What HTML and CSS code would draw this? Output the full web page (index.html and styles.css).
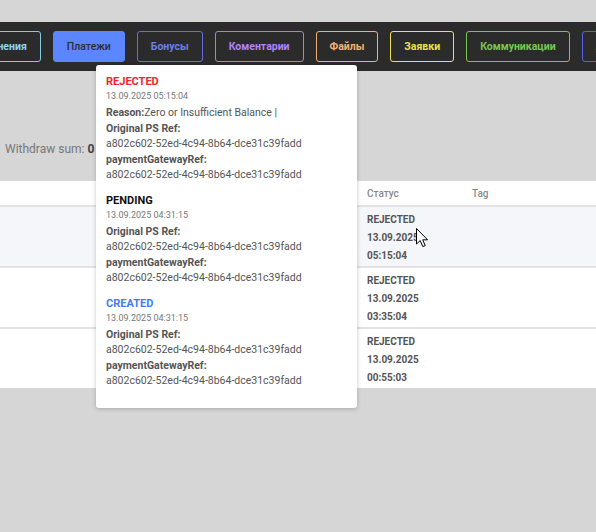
FILE: index.html
```html
<!DOCTYPE html>
<html lang="ru">
<head>
<meta charset="utf-8">
<link rel="stylesheet" href="styles.css">
</head>
<body>
<div class="page">
  <nav class="nav">
    <div class="nav-track">
      <button class="tab tab-cyan">Изменения</button>
      <button class="tab tab-active">Платежи</button>
      <button class="tab tab-indigo">Бонусы</button>
      <button class="tab tab-purple">Коментарии</button>
      <button class="tab tab-orange">Файлы</button>
      <button class="tab tab-yellow">Заявки</button>
      <button class="tab tab-green">Коммуникации</button>
      <button class="tab tab-blue">Аудит</button>
    </div>
  </nav>

  <div class="summary">Withdraw sum: <b>0</b></div>

  <div class="table">
    <div class="trow thead">
      <div class="cell"></div>
      <div class="cell">Статус</div>
      <div class="cell">Tag</div>
    </div>
    <div class="trow tbody hover">
      <div class="cell"></div>
      <div class="cell status">REJECTED<br>13.09.2025<br>05:15:04</div>
      <div class="cell"></div>
    </div>
    <div class="trow tbody">
      <div class="cell"></div>
      <div class="cell status">REJECTED<br>13.09.2025<br>03:35:04</div>
      <div class="cell"></div>
    </div>
    <div class="trow tbody last">
      <div class="cell"></div>
      <div class="cell status">REJECTED<br>13.09.2025<br>00:55:03</div>
      <div class="cell"></div>
    </div>
  </div>

  <div class="tooltip">
    <div class="tsec">
      <div class="thead-t red">REJECTED</div>
      <div class="tdate">13.09.2025 05:15:04</div>
      <div class="tlines">
        <div><b>Reason:</b>Zero or Insufficient Balance |</div>
        <div><b>Original PS Ref:</b></div>
        <div>a802c602-52ed-4c94-8b64-dce31c39fadd</div>
        <div><b>paymentGatewayRef:</b></div>
        <div>a802c602-52ed-4c94-8b64-dce31c39fadd</div>
      </div>
    </div>
    <div class="tsec">
      <div class="thead-t black">PENDING</div>
      <div class="tdate">13.09.2025 04:31:15</div>
      <div class="tlines">
        <div><b>Original PS Ref:</b></div>
        <div>a802c602-52ed-4c94-8b64-dce31c39fadd</div>
        <div><b>paymentGatewayRef:</b></div>
        <div>a802c602-52ed-4c94-8b64-dce31c39fadd</div>
      </div>
    </div>
    <div class="tsec">
      <div class="thead-t blue">CREATED</div>
      <div class="tdate">13.09.2025 04:31:15</div>
      <div class="tlines">
        <div><b>Original PS Ref:</b></div>
        <div>a802c602-52ed-4c94-8b64-dce31c39fadd</div>
        <div><b>paymentGatewayRef:</b></div>
        <div>a802c602-52ed-4c94-8b64-dce31c39fadd</div>
      </div>
    </div>
  </div>

  <svg class="cursor" width="13" height="20" viewBox="0 0 13 20">
    <path d="M0.5 0.5 L0.5 16 L4.2 12.6 L6.8 18.6 L9.2 17.6 L6.7 11.8 L11.6 11.8 Z" fill="#fff" stroke="#000" stroke-width="1" stroke-linejoin="round"/>
  </svg>
</div>
</body>
</html>
```

FILE: styles.css
```css
* { box-sizing: border-box; }
html, body {
  margin: 0;
  padding: 0;
  background: #d6d6d6;
  font-family: Roboto, "Liberation Sans", Arial, sans-serif;
}
.page {
  position: relative;
  width: 596px;
  height: 532px;
  overflow: hidden;
  padding-top: 22px;
}
.nav {
  height: 49px;
  background: #2b2b2b;
  overflow: hidden;
  display: flex;
  align-items: center;
}
.nav-track {
  display: flex;
  gap: 12px;
  margin-left: -43px;
  flex-shrink: 0;
}
.tab {
  flex-shrink: 0;
  height: 31px;
  padding: 0 13px;
  border: 1px solid;
  border-radius: 3px;
  background: transparent;
  font-family: Roboto, "Liberation Sans", Arial, sans-serif;
  font-size: 10.5px;
  font-weight: 700;
  cursor: pointer;
}
.tab-cyan { border-color: #7fcfe2; color: #8fd3f2; }
.tab-active { background: #5c86ff; border-color: #5c86ff; color: #2c2c34; font-weight: 500; }
.tab-indigo { border-color: #6a6cd8; color: #6c7fe6; }
.tab-purple { border-color: #a47df0; color: #b383fa; }
.tab-orange { border-color: #efb274; color: #f3b274; }
.tab-yellow { border-color: #ebe25a; color: #e9e34a; }
.tab-green { border-color: #79c64f; color: #79c64f; }
.tab-blue { border-color: #5a62e2; color: #5662f0; }

.summary {
  height: 110px;
  padding: 70px 0 0 5px;
  font-size: 12px;
  line-height: 16px;
  color: #777;
}
.summary b { color: #444; font-weight: 700; }

.table {
  background: #fff;
  width: 596px;
}
.trow {
  display: grid;
  grid-template-columns: 357px 105px 1fr;
}
.thead {
  height: 26px;
  border-bottom: 2px solid #e2e2e6;
  align-items: center;
  font-size: 10px;
  font-weight: 500;
  color: #8a8a8a;
}
.thead .cell { padding-left: 10px; padding-top: 1px; }
.tbody {
  height: 61px;
  border-bottom: 2px solid #e2e2e6;
}
.tbody.last { border-bottom: none; height: 59px; }
.tbody.hover { background: #f5f6fa; }
.status {
  padding: 4px 0 0 10px;
  font-size: 10px;
  line-height: 18px;
  font-weight: 700;
  color: #555;
}

.tooltip {
  position: absolute;
  left: 96px;
  top: 65px;
  width: 261px;
  height: 343px;
  background: #fff;
  border-radius: 3px;
  box-shadow: 0 1px 4px rgba(0,0,0,0.22);
  padding: 10px 10px 20px 10px;
  display: flex;
  flex-direction: column;
  gap: 11px;
}
.thead-t {
  font-size: 11px;
  line-height: 14px;
  font-weight: 700;
}
.red { color: #f5222d; }
.black { color: #111; }
.blue { color: #3d7ff2; }
.tdate {
  font-size: 9px;
  line-height: 14px;
  color: #777;
}
.tlines {
  margin-top: 2px;
  font-size: 10.5px;
  line-height: 15.5px;
  color: #555;
}
.tlines b { font-weight: 700; color: #555; }

.cursor {
  position: absolute;
  left: 416px;
  top: 228px;
}
```
